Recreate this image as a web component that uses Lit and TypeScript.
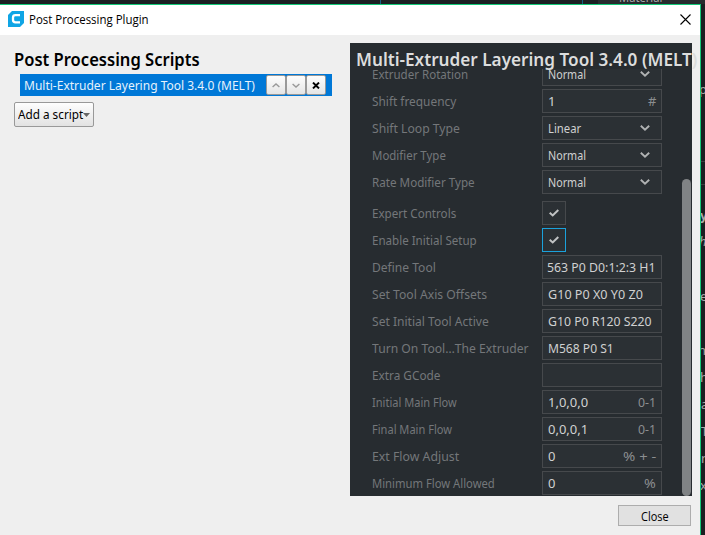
import { LitElement, html, css, svg } from "lit";
import { customElement, property } from "lit/decorators.js";

/** A single line of text, condensed or widened to span a given width. */
@customElement("fit-text")
class FitText extends LitElement {
  @property() text = "";
  @property({ type: Number }) width = 0;
  static styles = css`:host{display:block;white-space:pre;flex:none}span{display:inline-block;transform-origin:0 50%}`;
  render() { return html`<span>${this.text}</span>`; }
  updated() {
    const s = this.renderRoot.querySelector("span") as HTMLElement;
    if (this.width) {
      this.style.width = this.width + "px";
      s.style.transform = `scaleX(${this.width / s.offsetWidth})`;
    }
  }
}

const t = (text: string, width = 0) => html`<fit-text .text=${text} .width=${width}></fit-text>`;

type Row = { label: string; lw: number; kind: "select" | "input" | "check"; value?: string; vw?: number; unit?: string; uw?: number; focus?: boolean; group?: boolean; tail?: boolean };
const rows: Row[] = [
  { label: "Extruder Rotation", lw: 96, kind: "select", value: "Normal", vw: 38 },
  { label: "Shift frequency", lw: 84, kind: "input", value: "1", unit: "#", uw: 8 },
  { label: "Shift Loop Type", lw: 88, kind: "select", value: "Linear", vw: 33 },
  { label: "Modifier Type", lw: 74, kind: "select", value: "Normal", vw: 38 },
  { label: "Rate Modifier Type", lw: 103, kind: "select", value: "Normal", vw: 38 },
  { label: "Expert Controls", lw: 84, kind: "check", group: true },
  { label: "Enable Initial Setup", lw: 105, kind: "check", focus: true },
  { label: "Define Tool", lw: 64, kind: "input", value: "563 P0 D0:1:2:3 H1", vw: 109, tail: true },
  { label: "Set Tool Axis Offsets", lw: 115, kind: "input", value: "G10 P0 X0 Y0 Z0", vw: 95 },
  { label: "Set Initial Tool Active", lw: 117, kind: "input", value: "G10 P0 R120 S220", vw: 104 },
  { label: "Turn On Tool…The Extruder", lw: 157, kind: "input", value: "M568 P0 S1", vw: 66 },
  { label: "Extra GCode", lw: 68, kind: "input", value: "" },
  { label: "Initial Main Flow", lw: 85, kind: "input", value: "1,0,0,0", vw: 40, unit: "0-1", uw: 18 },
  { label: "Final Main Flow", lw: 80, kind: "input", value: "0,0,0,1", vw: 40, unit: "0-1", uw: 18 },
  { label: "Ext Flow Adjust", lw: 87, kind: "input", value: "0", unit: "% + -", uw: 33 },
  { label: "Minimum Flow Allowed", lw: 123, kind: "input", value: "0", unit: "%", uw: 12 },
];

/** Slivers of the main window's text that show past the dialog's right edge. */
const slivers: [string, number, number, string][] = [
  ["p", 699, 81, ""], ["y", 700, 207, "b"], ["h", 699, 233, "i"], ["e", 700, 288, ""], ["n", 698, 342, ""],
  ["h", 700, 369, ""], ["a", 701, 396, ""], ["T", 701, 423, ""], ["n", 701, 450, ""], ["x", 700, 477, ""],
];

const chevron = html`<svg class="chev" width="10" height="6" viewBox="0 0 10 6">${svg`<path d="M.8 .8 5 4.6 9.2 .8" fill="none" stroke="#b0b2b3" stroke-width="1.9"/>`}</svg>`;
const check = html`<svg width="10" height="8" viewBox="0 0 10 8">${svg`<path d="M.7 3.8 3.7 6.5 9.3 1" fill="none" stroke="#c0c2c3" stroke-width="2"/>`}</svg>`;

@customElement("app-root")
class AppRoot extends LitElement {
  static styles = css`
    :host{display:block;width:705px;height:535px;overflow:hidden;position:relative;background:#1b1f22;font:13px/18px "Noto Sans",sans-serif;color:#000}
    *{box-sizing:border-box}
    svg{display:block;flex:none}
    .behind{position:absolute;color:#a8a9aa;white-space:pre;line-height:16px}
    .behind.top{left:619px;top:-11px}
    .behind.b{font-weight:700}
    .behind.i{font-style:italic}
    .tick{position:absolute;left:380px;top:0;width:1px;height:4px;background:#175f80}
    .tick.second{left:582px}
    .panel-edge{position:absolute;left:598px;top:0;width:107px;height:4px;background:#272b2e}
    .rule{position:absolute;left:701px;top:161px;width:4px;height:1px;background:#3a3e40}
    .rule.second{top:184px}
    .window{position:absolute;left:0;top:4px;width:701px;height:531px;border-top:1px solid #12c878;border-right:1px solid #12c878;background:#efefef;display:flex;flex-direction:column}
    .titlebar{height:30px;background:#fff;display:flex;align-items:center;padding:0 9px 2px 8px;font-family:"Open Sans","Noto Sans",sans-serif;font-size:12.5px;flex:none}
    .titlebar .title{margin:2px 0 0 5px;flex:1}
    .content{display:flex;height:461px;padding:8px 0 0 14px;flex:none}
    .left{width:336px}
    h1{margin:4px 0 0;padding-top:1px;font-size:17px;line-height:24px;font-weight:600;height:24px}
    .script{margin-top:3px;margin-left:6px;height:22px;width:312px;background:#0078d7;color:#e6f2fc;display:flex;align-items:center;padding-left:4px}
    .script>fit-text{padding-bottom:1px}
    .tools{display:flex;margin-left:11px}
    .tool{width:20px;height:20px;border:1px solid #999;border-radius:2px;background:linear-gradient(#fdfdfd,#e5e5e5);display:flex;align-items:center;justify-content:center}
    .add{margin-top:6px;width:80px;height:25px;border:1px solid #999;border-radius:2px;background:linear-gradient(#fefefe,#e2e2e2);display:flex;align-items:center;padding:0 0 2px 3px}
    .add svg{margin-top:3px}
    .right{width:342px;height:453px;background:#272c30}
    .heading{position:relative;height:26px;padding:5px 0 0 6px;font-size:17px;line-height:24px;font-weight:600;color:#dcdddd;white-space:nowrap}
    .scroll{height:427px;overflow:hidden;display:flex;justify-content:space-between}
    .rows{margin-top:-7px;margin-left:22px;width:290px}
    .row{height:24px;margin-bottom:3px;display:flex;justify-content:space-between;align-items:center;color:#74777a;flex:none}
    .row fit-text{padding-bottom:1px}
    .group{margin-top:7px}
    .field{width:120px;height:24px;border:1px solid #46494c;background:#2b3034;color:#d0d1d1;padding:0 5px;display:flex;align-items:center;justify-content:space-between}
    .tail{padding-left:4px}
    .unit{color:#8b8e90}
    .chev{margin-right:6px}
    .box{width:24px;height:24px;border:1px solid #46494c;background:#2b3034;display:flex;align-items:center;justify-content:center;margin-right:96px}
    .focus{border-color:#1ba2dc}
    .bar{width:9px;margin:110px 1px 0 0;border-radius:5px;background:#808385}
    .close{margin:9px 0 0 618px;width:73px;height:21px;border:1px solid #adadad;background:#e1e1e1;display:flex;align-items:center;justify-content:center;font-family:"Open Sans","Noto Sans",sans-serif;font-size:12.5px;padding-top:2px;flex:none}
  `;

  control(r: Row) {
    if (r.kind === "check") return html`<div class="box ${r.focus ? "focus" : ""}">${check}</div>`;
    return html`<div class="field ${r.tail ? "tail" : ""}">${t(r.value ?? "", r.vw)}
      ${r.kind === "select" ? chevron : r.unit ? html`<span class="unit">${t(r.unit, r.uw)}</span>` : ""}</div>`;
  }

  render() {
    return html`
      <div class="panel-edge"></div><div class="tick"></div><div class="tick second"></div>
      <div class="rule"></div><div class="rule second"></div>
      <div class="behind top">${t("Material", 43)}</div>
      ${slivers.map(([s, x, y, c]) => html`<div class="behind ${c}" style="left:${x}px;top:${y}px">${s}</div>`)}
      <div class="window">
        <div class="titlebar">
          <svg width="16" height="16" viewBox="0 0 16 16"><path d="M4 0H16V12L12 16H0V4Z" fill="#10a5e5"/><path d="M12 4.2H7.5Q5 4.2 5 6.5V9Q5 11.3 7.5 11.3H12" fill="none" stroke="#fff" stroke-width="2.3"/></svg>
          <div class="title">${t("Post Processing Plugin", 120)}</div>
          <svg width="11" height="11" viewBox="0 0 11 11"><path d="M.5 .5 10.5 10.5M10.5 .5 .5 10.5" stroke="#000" stroke-width="1.1"/></svg>
        </div>
        <div class="content">
          <div class="left">
            <h1>${t("Post Processing Scripts", 186)}</h1>
            <div class="script">${t("Multi-Extruder Layering Tool 3.4.0 (MELT)", 231)}
              <div class="tools">
                <div class="tool"><svg width="8" height="5" viewBox="0 0 8 5"><path d="M.6 4 4 1 7.4 4" fill="none" stroke="#999" stroke-width="1.4"/></svg></div>
                <div class="tool"><svg width="8" height="5" viewBox="0 0 8 5"><path d="M.6 1 4 4 7.4 1" fill="none" stroke="#999" stroke-width="1.4"/></svg></div>
                <div class="tool"><svg width="8" height="7" viewBox="0 0 8 7"><path d="M1 .6 7 6.4M7 .6 1 6.4" stroke="#000" stroke-width="2"/></svg></div>
              </div>
            </div>
            <div class="add">${t("Add a script", 65)}<svg width="7" height="4" viewBox="0 0 7 4"><path d="M0 0H7L3.5 4Z" fill="#666"/></svg></div>
          </div>
          <div class="right">
            <div class="heading">${t("Multi-Extruder Layering Tool 3.4.0 (MELT)", 341)}</div>
            <div class="scroll">
              <div class="rows">${rows.map(r => html`<div class="row ${r.group ? "group" : ""}">${t(r.label, r.lw)}${this.control(r)}</div>`)}</div>
              <div class="bar"></div>
            </div>
          </div>
        </div>
        <div class="close">${t("Close", 28)}</div>
      </div>
    `;
  }
}
